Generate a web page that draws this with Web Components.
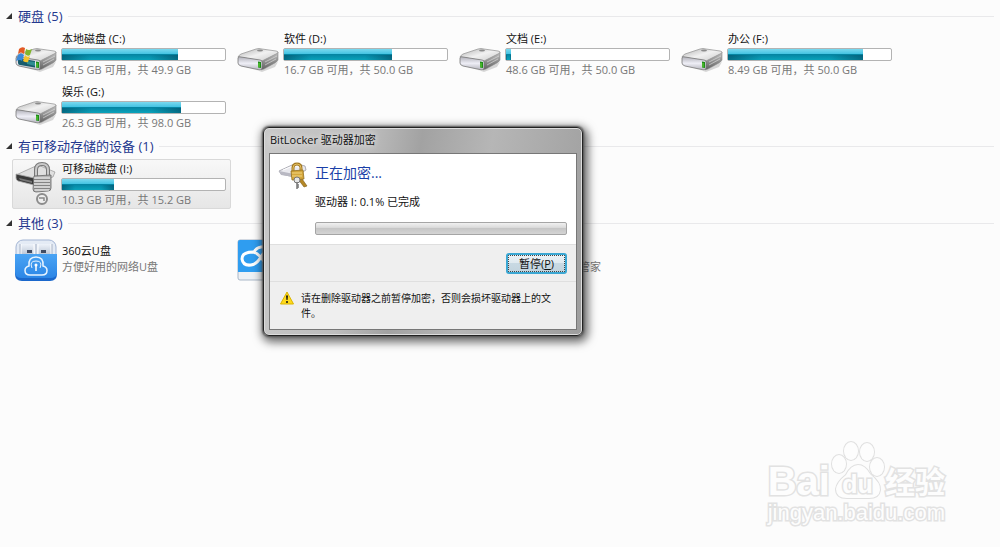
<!DOCTYPE html>
<html lang="zh-CN">
<head>
<meta charset="utf-8">
<title>计算机</title>
<style>
body {
  margin: 0;
  min-height: 100vh;
  box-sizing: border-box;
  padding: 3px 6px 0;
  position: relative;
  overflow: hidden;
  background: #fcfcfc;
  color: #111;
  font: 11px/16px "Open Sans", "Noto Sans CJK SC", sans-serif;
}
</style>
</head>
<body>

<drive-group heading="硬盘" count="5">
  <drive-tile name="本地磁盘 (C:)" info="14.5 GB 可用，共 49.9 GB" used="71" icon="system"></drive-tile>
  <drive-tile name="软件 (D:)" info="16.7 GB 可用，共 50.0 GB" used="66"></drive-tile>
  <drive-tile name="文档 (E:)" info="48.6 GB 可用，共 50.0 GB" used="3"></drive-tile>
  <drive-tile name="办公 (F:)" info="8.49 GB 可用，共 50.0 GB" used="83"></drive-tile>
  <drive-tile name="娱乐 (G:)" info="26.3 GB 可用，共 98.0 GB" used="73"></drive-tile>
</drive-group>

<drive-group heading="有可移动存储的设备" count="1">
  <drive-tile name="可移动磁盘 (I:)" info="10.3 GB 可用，共 15.2 GB" used="32" icon="locked" selected></drive-tile>
</drive-group>

<drive-group heading="其他" count="3">
  <app-tile name="360云U盘" info="方便好用的网络U盘" icon="usb"></app-tile>
  <app-tile icon="cloud"></app-tile>
  <app-tile info="管家" class="end"></app-tile>
</drive-group>

<encrypt-dialog heading="BitLocker 驱动器加密">
  <span slot="title">正在加密...</span>
  <span slot="status">驱动器 I: 0.1% 已完成</span>
  <span slot="note">请在删除驱动器之前暂停加密，否则会损坏驱动器上的文<br>件。</span>
</encrypt-dialog>

<site-mark></site-mark>

<script>
// shared drawing of the plain drive, used by two icons
const driveBody = `
  <defs>
    <linearGradient id="top" x1="0" y1="0" x2="1" y2="1"><stop offset="0" stop-color="#b0b0b0"/><stop offset=".5" stop-color="#f1f1f1"/><stop offset="1" stop-color="#cacaca"/></linearGradient>
    <linearGradient id="side" x1="0" y1="0" x2="0" y2="1"><stop offset="0" stop-color="#c4c4c4"/><stop offset="1" stop-color="#5f5f5f"/></linearGradient>
    <linearGradient id="front" x1="0" y1="0" x2="0" y2="1"><stop offset="0" stop-color="#b0b0b8"/><stop offset=".5" stop-color="#eeeef6"/><stop offset="1" stop-color="#b4b4bc"/></linearGradient>
  </defs>
  <path d="M4 34 L23 40 L41 31 L38 36 L25 41 Z" fill="#000" opacity=".15"/>
  <path d="M25 28 L41 21 V29 Q40 31 38 32 L27 38 L24 39 Z" fill="url(#side)" stroke="#8a8a8a" stroke-width=".6"/>
  <path d="M1 26 Q2 24 4 23 L19 18 Q22 17 25 18 L39 20 Q41 20 41 22 L25 30 Z" fill="url(#top)" stroke="#8f8f8f" stroke-width=".7"/>
  <path d="M1 27 Q1 25 4 26 L23 29 Q25 29 25 31 V37 Q25 39 23 39 L4 35 Q1 34 1 32 Z" fill="url(#front)" stroke="#777" stroke-width=".8"/>
  <ellipse cx="23" cy="19.500" rx="3" ry="1" fill="#8b8b8b"/>
  <path d="M28 31 L40 25 M28 34 L39 28" stroke="#e2e2e2" stroke-width=".6"/>
  <path d="M21 30.500 L24 31 L24 37 L21 36.500 Z" fill="#1e8c18"/>
  <path d="M22 32 V36" stroke="#6fdc3f"/>`;

const icons = {
  drive: `<svg viewBox="0 0 42 46" aria-hidden="true">${driveBody}</svg>`,
  system: `<svg viewBox="0 0 42 46" aria-hidden="true">${driveBody}
    <path d="M3 27 L20 30 L20 36.500 L5 34 Q3 34 3 32 Z" fill="#175b6c"/>
    <path d="M12 30 L20 31 V35 L12 33 Z" fill="#2f8d92"/>
    <path d="M4 18 Q7 15 10 17 L9 23 Q6 20 3 23 Z" fill="#e35a24"/>
    <path d="M11 18 Q14 20 17 18 L15 24 Q13 26 10 23 Z" fill="#80b52c"/>
    <path d="M3 24 Q6 21 9 24 L7 30 Q5 28 1 30 Z" fill="#3b8ad8"/>
    <path d="M10 24 Q12 27 15 25 L13 31 Q11 32 8 30 Z" fill="#f4c22b"/></svg>`,
  locked: `<svg viewBox="0 0 42 46" aria-hidden="true">
    <path d="M1 14 L23 4 L40 11 L38 16 L20 20 Z" fill="#e0e0e0" stroke="#888" stroke-width=".6"/>
    <path d="M1 13 L19 17 L19 24 L3 20 Q1 19 1 17 Z" fill="#3a3a3a" stroke="#aaa" stroke-width=".8"/>
    <path d="M4 17 L17 20 L17 22 L5 19 Z" fill="#777"/>
    <path d="M21 17 V9 Q21 3 27 3 Q33 3 33 9 V16" fill="none" stroke="#777" stroke-width="4"/>
    <path d="M21 17 V9 Q21 3 27 3 Q33 3 33 9 V16" fill="none" stroke="#c9c9c9" stroke-width="2"/>
    <path d="M19 15 L36 14 V27 Q36 30 33 30 L21 31 Q18 31 18 28 Z" fill="#b5b5b5" stroke="#666" stroke-width=".8"/>
    <path d="M19 17 H35 M19 20 H35 M19 23 H35 M19 26 H35 M20 29 H34" stroke="#eee"/>
    <path d="M19 18.500 H35 M19 21.500 H35 M19 24.500 H35 M19 27.500 H35" stroke="#777" stroke-width=".8"/>
    <ellipse cx="27" cy="38" rx="5" ry="5" fill="#eee" stroke="#8c8c8c" stroke-width="2"/>
    <path d="M24 37 H29 V40" fill="none" stroke="#888" stroke-width="1.500"/></svg>`,
  usb: `<svg viewBox="0 0 42 42" aria-hidden="true">
    <defs>
      <linearGradient id="b" x1="0" y1="0" x2="0" y2="1"><stop offset="0" stop-color="#4aa4f4"/><stop offset="1" stop-color="#2c86e6"/></linearGradient>
      <linearGradient id="m" x1="0" y1="0" x2="0" y2="1"><stop offset="0" stop-color="#eef3fa"/><stop offset="1" stop-color="#bfc9d8"/></linearGradient>
    </defs>
    <rect x="1" y="1" width="40" height="40" rx="7" fill="#e4ebf5" stroke="#a3b5d4"/>
    <path d="M6 5 H19 V15 H6 Z M23 5 H36 V15 H23 Z" fill="url(#m)"/>
    <path d="M6 5 V15 M19 5 V15 M23 5 V15 M36 5 V15" stroke="#fff"/>
    <path d="M5 5 V15 M21 5 V15 M37 5 V15" stroke="#aab4c6"/>
    <rect x="12" y="11" width="5" height="3" fill="#414c62"/><rect x="26" y="11" width="5" height="3" fill="#414c62"/>
    <path d="M0 15 H42 V35 Q42 42 35 42 H7 Q0 42 0 35 Z" fill="#1b68cc"/>
    <path d="M0 15 H42 V33 Q42 39 35 39 H7 Q0 39 0 33 Z" fill="url(#b)"/>
    <path d="M15 36 Q10 36 10 31.500 Q10 28 14 27 Q13 18 21 18 Q29 18 28 27 Q32 28 32 31.500 Q32 36 27 36 Z" fill="none" stroke="#e8f4ff" stroke-width="1.500"/>
    <path d="M17 29 Q14 22 21 22 Q28 22 25 29" fill="none" stroke="#e8f4ff"/>
    <circle cx="21" cy="26" r="1.500" fill="#fff"/><path d="M21 26 V32" stroke="#fff" stroke-width="1.500"/></svg>`,
  cloud: `<svg viewBox="0 0 42 42" aria-hidden="true">
    <rect x="1" y="1" width="40" height="40" rx="2" fill="#eef1f5" stroke="#a9b7c8"/>
    <path d="M1 33 V3 Q1 1 3 1 H41 V33 Z" fill="#2f9df0"/>
    <path d="M16 13 Q5 13 5 20 Q6 27 14 26 Q20 25 24 18 Q28 11 35 13 M17 13 Q20 7 30 8 M16 13 Q21 14 26 21 Q30 26 37 24" fill="none" stroke="#fff" stroke-width="3"/></svg>`,
  key: `<svg viewBox="0 0 30 28" aria-hidden="true">
    <path d="M1 9 L14 3 Q20 1 27 4 L28 8 L16 15 L3 12 Z" fill="#e9e9ee" stroke="#9a9aa5" stroke-width=".8"/>
    <path d="M1 9 L16 12 L16 15 L3 13 Z" fill="#b9b9c3"/>
    <path d="M5 8 L15 4 L25 6" fill="none" stroke="#fff"/>
    <path d="M15 10 V6 Q15 2 19 2 Q23 2 23 6 V10" fill="none" stroke="#a47a22" stroke-width="3"/>
    <path d="M15 9 V6 Q15 2 19 2 Q23 2 23 6 V9" fill="none" stroke="#e4c062" stroke-width="1"/>
    <path d="M22 14 L29 24 L26 25 L20 17 Z" fill="#b58826" stroke="#7c5b14" stroke-width=".6"/>
    <path d="M13 9 L25 8 L26 17 L14 18 Z" fill="#d5a73b" stroke="#94701e" stroke-width=".8"/>
    <path d="M14 11 H24 M14 14 H24" stroke="#f2d683"/>
    <circle cx="19" cy="18" r="3" fill="#e6e6e6" stroke="#777"/>
    <path d="M19 20 V27 M19 23 H21 M19 25 H21" stroke="#777" stroke-width="1.500"/></svg>`,
  warning: `<svg viewBox="0 0 14 14" role="img" aria-label="警告">
    <path d="M7 1 L13.500 13 H.5 Z" fill="#ffd91a" stroke="#d9b400" stroke-linejoin="round"/>
    <path d="M6 4.500 H8 L7.500 9 H6.500 Z" fill="#111"/><circle cx="7" cy="11" r="1" fill="#111"/></svg>`
};

class DriveGroup extends HTMLElement {
  constructor() {
    super();
    this.attachShadow({ mode: "open" });
  }

  connectedCallback() {
    this.shadowRoot.innerHTML = `
      <style>
        :host { display: block; margin-bottom: 1px; }
        h2 {
          display: flex; align-items: center; gap: 6px;
          margin: 0; height: 26px;
          font-size: 13px; line-height: 26px; font-weight: 400; color: #24388f;
        }
        h2::after { content: ""; flex: 1; height: 1px; background: #e9e9eb; }
        svg { width: 6px; height: 6px; }
        .tiles {
          display: grid; grid-template-columns: repeat(auto-fill, 219px);
          gap: 3px; padding-left: 6px;
        }
      </style>
      <h2>
        <svg viewBox="0 0 6 6" aria-hidden="true"><path d="M6 0 V6 H0 Z" fill="#333"/></svg>
        <span>${this.getAttribute("heading")} (${this.getAttribute("count")})</span>
      </h2>
      <div class="tiles"><slot></slot></div>`;
  }
}
window.customElements.define("drive-group", DriveGroup);

class DriveTile extends HTMLElement {
  constructor() {
    super();
    this.attachShadow({ mode: "open" });
  }

  connectedCallback() {
    const icon = icons[this.getAttribute("icon") || "drive"];
    this.shadowRoot.innerHTML = `
      <style>
        :host {
          display: flex; gap: 4px; height: 50px; box-sizing: border-box;
          padding: 0 4px 0 2px; border: 1px solid transparent; border-radius: 2px;
        }
        :host([selected]) {
          background: linear-gradient(#f8f8f8, #e6e6e6); border-color: #d9d9d9;
        }
        svg { width: 42px; height: 46px; flex: none; padding-top: 1px; }
        .text { flex: 1; min-width: 0; }
        .name, .info { padding-left: 1px; white-space: nowrap; }
        .name { line-height: 18px; }
        .info { line-height: 17px; color: #777; }
        .bar {
          height: 13px; box-sizing: border-box;
          border: 1px solid #b3b3b3; border-radius: 2px; background: #fff;
        }
        .fill {
          height: 100%;
          background:
            linear-gradient(90deg, #00405888, transparent 25%, transparent 75%, #00405888) 0 100% / 100% 50% no-repeat,
            linear-gradient(#7bd9ef, #43c3e2 45%, #0585a3 50%, #0aa3bb);
        }
      </style>
      ${icon}
      <div class="text">
        <div class="name">${this.getAttribute("name")}</div>
        <div class="bar"><div class="fill"></div></div>
        <div class="info">${this.getAttribute("info")}</div>
      </div>`;
    this.shadowRoot.querySelector(".fill").style.width = this.getAttribute("used") + "%";
  }
}
window.customElements.define("drive-tile", DriveTile);

class AppTile extends HTMLElement {
  constructor() {
    super();
    this.attachShadow({ mode: "open" });
  }

  connectedCallback() {
    this.shadowRoot.innerHTML = `
      <style>
        :host { display: flex; gap: 5px; height: 50px; padding: 3px 3px 0; box-sizing: border-box; }
        .icon { width: 42px; flex: none; }
        svg { display: block; width: 42px; height: 42px; }
        .text { display: flex; flex-direction: column; padding-top: 4px; min-width: 95px; }
        .name { height: 16px; }
        .info { color: #777; }
        :host(.end) .info { text-align: right; }
      </style>
      <div class="icon">${icons[this.getAttribute("icon")] || ""}</div>
      <div class="text">
        <span class="name">${this.getAttribute("name") || ""}</span>
        <span class="info">${this.getAttribute("info") || ""}</span>
      </div>`;
  }
}
window.customElements.define("app-tile", AppTile);

class EncryptDialog extends HTMLElement {
  constructor() {
    super();
    this.attachShadow({ mode: "open" });
  }

  connectedCallback() {
    this.shadowRoot.innerHTML = `
      <style>
        /* floats over the window */
        :host {
          position: absolute; left: 263px; top: 127px; width: 320px;
          box-sizing: border-box; padding: 0 5px 5px;
          border: 1px solid #222; border-radius: 6px;
          background: linear-gradient(100deg, #c9c9c9, #bdbdbd 30%, #a2a2a2 45%, #b6b6b6 65%, #9d9d9d);
          box-shadow: inset 0 0 0 1px #dcdcdc, 0 0 2px 1px #555, 2px 3px 10px 3px #0009;
        }
        h1 { margin: 0; padding: 0 0 1px 1px; font-size: 11px; line-height: 24px; font-weight: 400; text-shadow: 0 0 6px #fff; }
        .body { border: 1px solid #777; background: #fff; }
        .main { display: flex; gap: 7px; height: 90px; box-sizing: border-box; padding: 8px 9px 0 8px; }
        .main svg { width: 30px; height: 28px; flex: none; }
        .col { flex: 1; }
        h2 { margin: 0 0 10px; font-size: 14px; line-height: 22px; font-weight: 400; color: #1a3fa8; }
        .status { line-height: 16px; }
        .progress {
          height: 13px; margin-top: 12px; box-sizing: border-box;
          border: 1px solid #a5a5a5; border-radius: 2px;
          background: linear-gradient(#f0f0f0, #dcdcdc 40%, #c6c6c6 50%, #d4d4d4);
        }
        .actions {
          display: flex; justify-content: flex-end; align-items: center;
          height: 37px; box-sizing: border-box; padding-right: 9px;
          background: #efefef; border-top: 1px solid #dfdfdf;
        }
        button {
          width: 61px; height: 21px; padding: 0;
          font: inherit; line-height: 15px; color: #111;
          border: 2px solid #3ba7d3; border-radius: 3px;
          background: linear-gradient(#ecf2f6, #dfe9ef 50%, #c8d9e3 50%, #c3d4de);
          outline: 1px dotted #444; outline-offset: -3px;
        }
        .note {
          display: flex; gap: 7px; height: 48px; box-sizing: border-box;
          padding: 9px 0 0 10px; background: #efefef; border-top: 1px solid #dfdfdf;
          font-size: 10px; line-height: 15px;
        }
        .note svg { width: 14px; height: 14px; flex: none; }
      </style>
      <h1>${this.getAttribute("heading")}</h1>
      <div class="body">
        <div class="main">
          ${icons.key}
          <div class="col">
            <h2><slot name="title"></slot></h2>
            <div class="status"><slot name="status"></slot></div>
            <div class="progress" role="progressbar" aria-valuenow="0.1" aria-label="加密进度"></div>
          </div>
        </div>
        <div class="actions"><button type="button">暂停(<u>P</u>)</button></div>
        <div class="note">${icons.warning}<div><slot name="note"></slot></div></div>
      </div>`;
  }
}
window.customElements.define("encrypt-dialog", EncryptDialog);

class SiteMark extends HTMLElement {
  constructor() {
    super();
    this.attachShadow({ mode: "open" });
    this.shadowRoot.innerHTML = `
      <style>
        :host {
          position: absolute; right: 55px; bottom: 21px;
          color: #fdfdfd; -webkit-text-stroke: 3px #e2e2e2; paint-order: stroke fill;
          font-family: "Liberation Sans", "Noto Sans CJK SC", sans-serif;
        }
        .logo { display: flex; align-items: flex-end; height: 60px; font-weight: 700; }
        .bai { font-size: 40px; line-height: 38px; }
        .cn { font-size: 30px; line-height: 35px; }
        .paw { display: grid; width: 55px; height: 60px; }
        .paw > * { grid-area: 1 / 1; }
        .du { align-self: end; justify-self: center; font-size: 25px; line-height: 32px; }
        .site { font-size: 22px; line-height: 26px; }
      </style>
      <div class="logo">
        <span class="bai">Bai</span>
        <span class="paw">
          <svg viewBox="0 0 55 60" fill="#fdfdfd" stroke="#e0e0e0" stroke-width="2" aria-hidden="true">
            <ellipse cx="9" cy="24" rx="7" ry="9"/>
            <ellipse cx="21" cy="11" rx="7" ry="9"/>
            <ellipse cx="37" cy="12" rx="7" ry="9"/>
            <ellipse cx="47" cy="27" rx="7" ry="9"/>
            <path d="M28 25 Q35 25 40 34 Q51 43 50 50 Q49 58 39 58 H17 Q6 58 6 49 Q7 42 16 35 Q21 25 28 25 Z"/>
          </svg>
          <span class="du">du</span>
        </span>
        <span class="cn">经验</span>
      </div>
      <div class="site">jingyan.baidu.com</div>`;
  }
}
window.customElements.define("site-mark", SiteMark);
</script>
</body>
</html>
